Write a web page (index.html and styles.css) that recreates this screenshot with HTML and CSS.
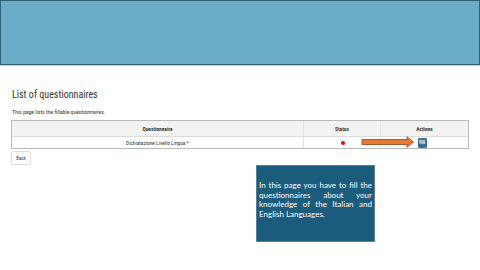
FILE: index.html
```html
<!DOCTYPE html>
<html>
<head>
<meta charset="utf-8">
<link rel="stylesheet" href="styles.css">
</head>
<body>
<div class="topbar"><div class="banner"></div></div>
<main class="content">
  <h1 class="title">List of questionnaires</h1>
  <p class="lead">This page lists the fillable questionnaires.</p>
  <div class="table">
    <div class="row head">
      <div class="cell c-q">Questionnaire</div>
      <div class="cell c-s">Status</div>
      <div class="cell c-a">Actions</div>
    </div>
    <div class="row body">
      <div class="cell c-q">Dichiarazione Livello Lingua *</div>
      <div class="cell c-s"><span class="dot"></span></div>
      <div class="cell c-a"><span class="fill">Fill</span></div>
    </div>
  </div>
  <div class="actions"><span class="back">Back</span></div>
</main>
<svg class="arrow" width="54" height="12" viewBox="0 0 54 12">
  <path d="M1 3.5 H46 V0.8 L52.5 6 L46 11.2 V8.5 H1 Z" fill="#e57a35" stroke="#9c5128" stroke-width="0.9"/>
</svg>
<div class="note">In this page you have to fill the questionnaires about your knowledge of the Italian and English Languages.</div>
</body>
</html>
```
FILE: styles.css
```css
html, body { margin: 0; padding: 0; background: #fff; }
body {
  width: 480px; height: 270px; position: relative; overflow: hidden;
  font-family: "Roboto Condensed", "DejaVu Sans Condensed", "Liberation Sans Narrow", Roboto, sans-serif;
  color: #333;
}
.topbar { border-bottom: 1px solid #c9d2d4; }
.banner {
  height: 63px;
  background: #6aabc6;
  border: 1px solid #2f5f72;
}
.content { padding: 0 11px; }
.title {
  margin: 23px 0 0 1px;
  font-size: 10px; line-height: 12px; font-weight: 400; color: #333;
}
.lead {
  margin: 8px 0 0 1px;
  font-size: 5.7px; line-height: 7px; color: #333;
}
.table {
  margin-top: 4px;
  border: 1px solid #b9b9b9;
}
.row { display: grid; grid-template-columns: 291px 77px 1fr; }
.head { background: #f3f3f3; height: 15px; border-bottom: 1px solid #dcdcdc; }
.body { height: 11px; }
.cell {
  display: flex; align-items: center; justify-content: center;
  font-size: 5.4px; border-left: 1px solid #e2e2e2; color: #333;
}
.cell.c-q { border-left: none; }
.head .cell { font-weight: 700; }
.dot { width: 4px; height: 4px; border-radius: 50%; background: #f20000; margin-left: 2px; }
.fill {
  display: flex; align-items: center; justify-content: center;
  width: 9px; height: 10px; background: #3a6f9a; color: #fff;
  font-size: 4.6px; font-weight: 700; border-radius: 1px; margin-left: -5px;
}
.actions { display: flex; margin-top: 2px; }
.back {
  display: flex; align-items: center; justify-content: center;
  width: 18px; height: 12px; border: 1px solid #dedede; border-radius: 2px;
  font-size: 4.8px; color: #333;
}
.arrow { position: absolute; left: 361px; top: 135.5px; }
.note {
  position: absolute; left: 256px; top: 165px;
  width: 119px; height: 77px;
  box-sizing: border-box;
  padding: 15px 2px 0 2px;
  background: #1b5b7b; border: 1px solid #5d7f92;
  color: #fff; font-family: Lato, "Open Sans", sans-serif;
  font-size: 8px; line-height: 9.6px; text-align: justify;
}
```
